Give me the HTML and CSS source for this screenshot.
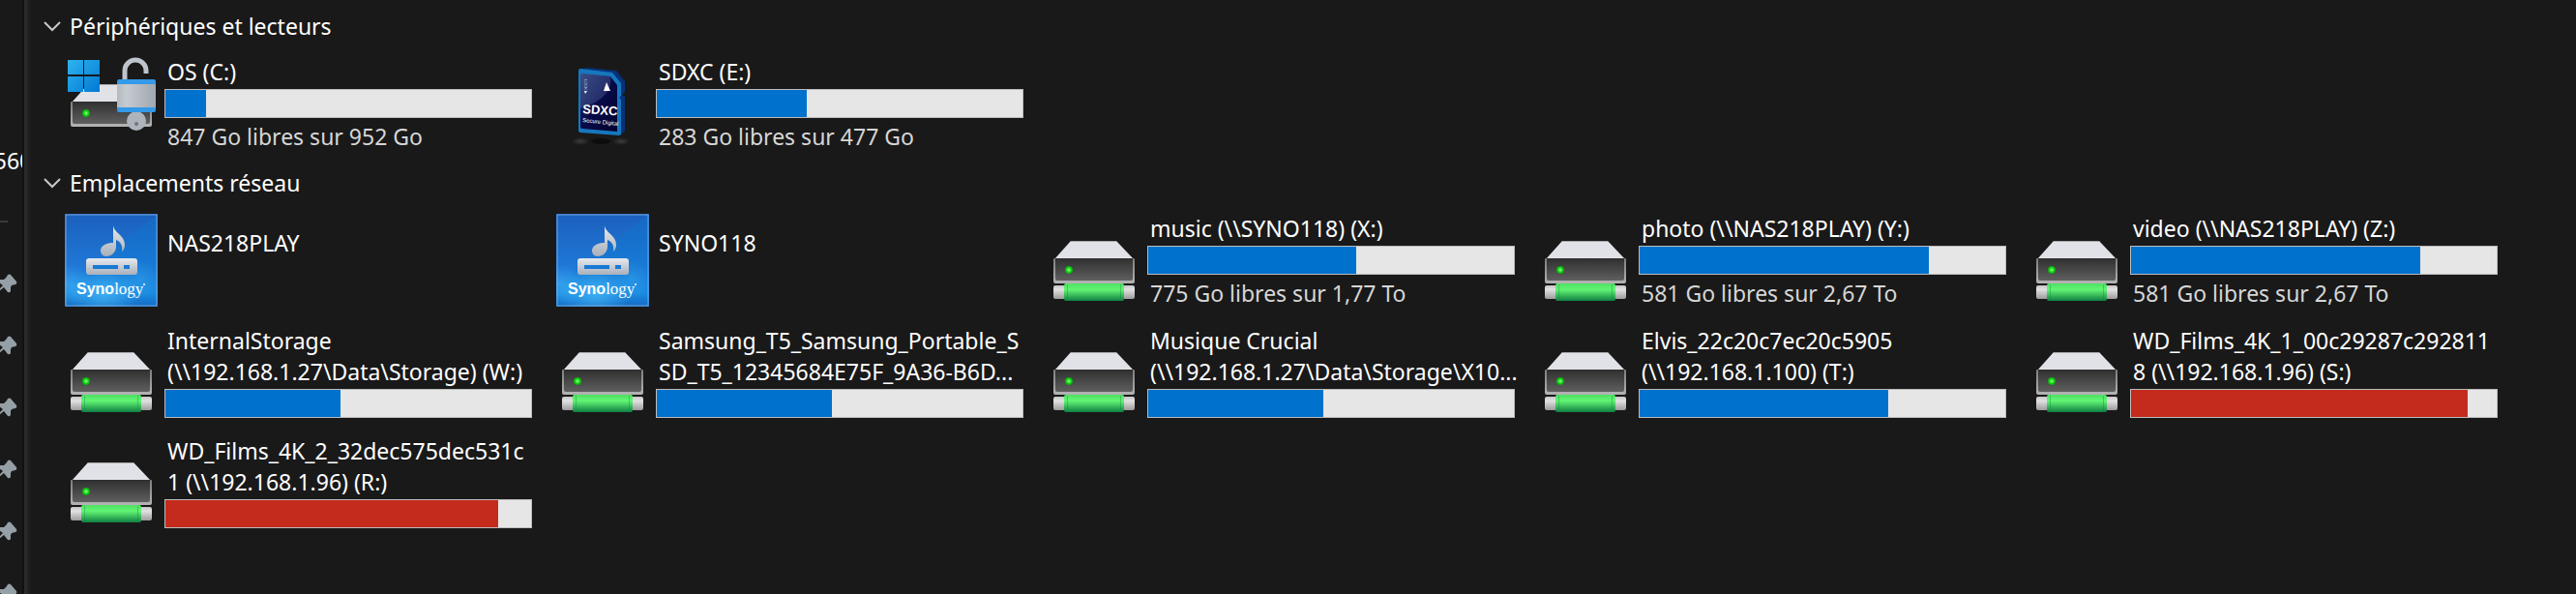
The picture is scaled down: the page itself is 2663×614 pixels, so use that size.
FILE: index.html
```
<!DOCTYPE html>
<html lang="fr">
<head>
	<meta charset="UTF-8">
	<title>Ce PC</title>
	<link rel="stylesheet" href="styles.css">
</head>
<body>
	<!-- shared icons -->
	<svg class="defs" width="0" height="0" aria-hidden="true">
		<defs>
			<linearGradient id="front" x1="0" y1="0" x2="0" y2="1">
				<stop offset="0" stop-color="#2f2f2f"/>
				<stop offset="1" stop-color="#5f5f5f"/>
			</linearGradient>
			<linearGradient id="edge" x1="0" y1="0" x2="0" y2="1">
				<stop offset="0" stop-color="#7c7c7c"/>
				<stop offset="1" stop-color="#b4b4b4"/>
			</linearGradient>
			<linearGradient id="pipe" x1="0" y1="0" x2="0" y2="1">
				<stop offset="0" stop-color="#c4c4c4"/>
				<stop offset=".3" stop-color="#e2e2e2"/>
				<stop offset="1" stop-color="#9c9c9c"/>
			</linearGradient>
			<linearGradient id="green" x1="0" y1="0" x2="0" y2="1">
				<stop offset="0" stop-color="#4fe063"/>
				<stop offset=".35" stop-color="#62f574"/>
				<stop offset="1" stop-color="#108043"/>
			</linearGradient>
			<radialGradient id="led">
				<stop offset="0" stop-color="#a8ffa0"/>
				<stop offset=".5" stop-color="#1fe01f"/>
				<stop offset="1" stop-color="#07a007"/>
			</radialGradient>
			<linearGradient id="win" x1="0" y1="0" x2="1" y2="1">
				<stop offset="0" stop-color="#2fb4ee"/>
				<stop offset="1" stop-color="#0078d4"/>
			</linearGradient>
			<linearGradient id="steel" x1="0" y1="0" x2="1" y2="0">
				<stop offset="0" stop-color="#b4bac2"/>
				<stop offset=".25" stop-color="#c6cad1"/>
				<stop offset="1" stop-color="#9fa7b0"/>
			</linearGradient>
			<linearGradient id="sky" x1="0" y1="0" x2="0" y2="1">
				<stop offset="0" stop-color="#1c60bd"/>
				<stop offset=".6" stop-color="#2079d8"/>
				<stop offset=".85" stop-color="#2592ea"/>
				<stop offset="1" stop-color="#1a62bd"/>
			</linearGradient>
			<radialGradient id="glow">
				<stop offset="0" stop-color="#45b8f8" stop-opacity=".8"/>
				<stop offset="1" stop-color="#45b8f8" stop-opacity="0"/>
			</radialGradient>
			<linearGradient id="silver" x1="0" y1="0" x2="0" y2="1">
				<stop offset="0" stop-color="#e6e9ee"/>
				<stop offset="1" stop-color="#a9b0ba"/>
			</linearGradient>
			<linearGradient id="card" x1="0" y1="0" x2="1" y2="1">
				<stop offset="0" stop-color="#24386f"/>
				<stop offset=".5" stop-color="#080a48"/>
				<stop offset="1" stop-color="#02022e"/>
			</linearGradient>
			<radialGradient id="shade">
				<stop offset="0" stop-color="#3c3c3c"/>
				<stop offset="1" stop-color="#3c3c3c" stop-opacity="0"/>
			</radialGradient>
		</defs>

		<symbol id="box" viewBox="0 0 96 96">
			<path d="M24 28h47l18 19H7z" fill="#e1e2e7"/>
			<path d="M24 28.500h47" stroke="#a9a9ad"/>
			<path d="M6 47q0-1 1-1h82q1 0 1 1v23q0 2-2 2H8q-2 0-2-2z" fill="url(#edge)"/>
			<path d="M8 46h80v21q0 2-2 2H10q-2 0-2-2z" fill="url(#front)"/>
			<circle cx="22" cy="58" r="4" fill="url(#led)"/>
		</symbol>

		<symbol id="netdrive" viewBox="0 0 96 96">
			<use href="#box" width="96" height="96"/>
			<rect x="6" y="74" width="84" height="14" rx="2" fill="url(#pipe)"/>
			<rect x="17" y="72" width="62" height="18" rx="2" fill="url(#green)"/>
			<path d="M20.500 73v16M75.500 73v16" stroke="#0e7a3c" stroke-opacity=".35"/>
		</symbol>

		<symbol id="osdrive" viewBox="0 0 96 96">
			<use href="#box" width="96" height="96"/>
			<path d="M3 3h16v15H3zM20 3h16v15H20zM3 20h16v16H3zM20 20h16v16H20z" fill="url(#win)"/>
			<path d="M62 24V14a11 11 0 0 1 22 0v3" fill="none" stroke="#bfc4cc" stroke-width="5"/>
			<circle cx="74" cy="66" r="10" fill="#adb4bc"/>
			<circle cx="74" cy="69" r="2" fill="#6f757c"/>
			<rect x="54" y="23" width="40" height="34" rx="2" fill="#3399e8"/>
			<rect x="54" y="28" width="40" height="24" fill="url(#steel)"/>
		</symbol>

		<symbol id="sdcard" viewBox="0 0 96 96">
			<ellipse cx="25" cy="87" rx="9" ry="4" fill="url(#shade)"/>
			<ellipse cx="67" cy="87" rx="9" ry="4" fill="url(#shade)"/>
			<ellipse cx="46" cy="87" rx="10" ry="3" fill="#0d0d0d"/>
			<path d="M24 13l8-2 30 3 9 11v11l-3 3 3 2v35l-5 5z" fill="#06327c"/>
			<path d="M23 14q0-2 2-2l33 4 9 11v13l-2 2 2 2v35q0 2-2 2l-40-3q-2 0-2-2z" fill="#1677bd"/>
			<path d="M25 19q0-2 2-2l29 3 7 9v48l-36-3q-2 0-2-2z" fill="url(#card)"/>
			<path d="M25 19q0-2 2-2l29 3q4 22-31 33z" fill="#7d93cf" opacity=".25"/>
			<path d="M52 26l4 9h-7z" fill="#fff"/>
			<path d="M29 35h3l-2 3z" fill="#fff"/>
			<text class="sd-lock" x="29" y="23" transform="rotate(90 29 23)">LOCK</text>
			<text class="sd-name" x="27" y="58" transform="rotate(4 27 58)">SDXC</text>
			<text class="sd-sub" x="27" y="67" transform="rotate(6 27 67)">Secure Digital</text>
		</symbol>

		<symbol id="synology" viewBox="0 0 96 96">
			<rect width="96" height="96" fill="url(#sky)"/>
			<path d="M96 0v96H0V76z" fill="#067fd0" opacity=".3"/>
			<ellipse cx="40" cy="82" rx="38" ry="26" fill="url(#glow)"/>
			<circle cx="6" cy="74" r="22" fill="url(#glow)" opacity=".6"/>
			<circle cx="78" cy="68" r="20" fill="url(#glow)" opacity=".4"/>
			<rect x="1" y="1" width="94" height="94" fill="none" stroke="#86b3e4" stroke-opacity=".8"/>
			<path d="M50 12c1 8 12 10 12 20 0 3-1 5-3 7 1-6-1-10-6-12v7c0 6-5 10-10 10-4 0-6-3-6-6 0-5 6-8 13-8z" fill="url(#silver)"/>
			<path d="M25 46h47q3 0 3 3v11q0 3-3 3H25q-3 0-3-3V49q0-3 3-3zm4 7v4h26v-4zm32 0v4h6v-4z" fill="url(#silver)" fill-rule="evenodd"/>
			<text class="syno-bold" x="12" y="83">Syno<tspan class="syno-thin">logy</tspan></text>
			<circle cx="82" cy="73" r="1" fill="#fff"/>
		</symbol>

		<symbol id="pin" viewBox="0 0 20 20">
			<path d="M10 1q2-1 3 0l6 7q1 2-1 3l-4 1-1 2v4q-1 2-3 1l-4-5-5 4-1-1 5-5-4-3q-1-2 1-3h4l3-3z" fill="#959fa6"/>
		</symbol>
	</svg>

	<div class="explorer">
		<aside class="sidebar">
			<span class="folder">560</span>
			<hr class="divider">
			<ul class="pins">
				<li><svg><use href="#pin"/></svg></li>
				<li><svg><use href="#pin"/></svg></li>
				<li><svg><use href="#pin"/></svg></li>
				<li><svg><use href="#pin"/></svg></li>
				<li><svg><use href="#pin"/></svg></li>
				<li><svg><use href="#pin"/></svg></li>
			</ul>
		</aside>
		<div class="splitter"></div>

		<main class="content">
			<section class="group">
				<h2>
					<button class="group-title" type="button">
						<svg class="chevron" viewBox="0 0 16 9"><path d="M0 0l8 8 8-8"/></svg>
						Périphériques et lecteurs
					</button>
				</h2>
				<div class="items">
					<div class="item">
						<svg class="icon"><use href="#osdrive"/></svg>
						<div class="info">
							<p class="name">OS (C:)</p>
							<div class="bar"><div class="used" style="width:11%"></div></div>
							<p class="free">847 Go libres sur 952 Go</p>
						</div>
					</div>
					<div class="item">
						<svg class="icon"><use href="#sdcard"/></svg>
						<div class="info">
							<p class="name">SDXC (E:)</p>
							<div class="bar"><div class="used" style="width:41%"></div></div>
							<p class="free">283 Go libres sur 477 Go</p>
						</div>
					</div>
				</div>
			</section>

			<section class="group">
				<h2>
					<button class="group-title" type="button">
						<svg class="chevron" viewBox="0 0 16 9"><path d="M0 0l8 8 8-8"/></svg>
						Emplacements réseau
					</button>
				</h2>
				<div class="items">
					<div class="item">
						<svg class="icon"><use href="#synology"/></svg>
						<div class="info device">
							<p class="name">NAS218PLAY</p>
						</div>
					</div>
					<div class="item">
						<svg class="icon"><use href="#synology"/></svg>
						<div class="info device">
							<p class="name">SYNO118</p>
						</div>
					</div>
					<div class="item">
						<svg class="icon"><use href="#netdrive"/></svg>
						<div class="info">
							<p class="name">music (\\SYNO118) (X:)</p>
							<div class="bar"><div class="used" style="width:57%"></div></div>
							<p class="free">775 Go libres sur 1,77 To</p>
						</div>
					</div>
					<div class="item">
						<svg class="icon"><use href="#netdrive"/></svg>
						<div class="info">
							<p class="name">photo (\\NAS218PLAY) (Y:)</p>
							<div class="bar"><div class="used" style="width:79%"></div></div>
							<p class="free">581 Go libres sur 2,67 To</p>
						</div>
					</div>
					<div class="item">
						<svg class="icon"><use href="#netdrive"/></svg>
						<div class="info">
							<p class="name">video (\\NAS218PLAY) (Z:)</p>
							<div class="bar"><div class="used" style="width:79%"></div></div>
							<p class="free">581 Go libres sur 2,67 To</p>
						</div>
					</div>
					<div class="item">
						<svg class="icon"><use href="#netdrive"/></svg>
						<div class="info">
							<p class="name">InternalStorage<br>(\\192.168.1.27\Data\Storage) (W:)</p>
							<div class="bar"><div class="used" style="width:48%"></div></div>
						</div>
					</div>
					<div class="item">
						<svg class="icon"><use href="#netdrive"/></svg>
						<div class="info">
							<p class="name">Samsung_T5_Samsung_Portable_S<br>SD_T5_12345684E75F_9A36-B6D...</p>
							<div class="bar"><div class="used" style="width:48%"></div></div>
						</div>
					</div>
					<div class="item">
						<svg class="icon"><use href="#netdrive"/></svg>
						<div class="info">
							<p class="name">Musique Crucial<br>(\\192.168.1.27\Data\Storage\X10...</p>
							<div class="bar"><div class="used" style="width:48%"></div></div>
						</div>
					</div>
					<div class="item">
						<svg class="icon"><use href="#netdrive"/></svg>
						<div class="info">
							<p class="name">Elvis_22c20c7ec20c5905<br>(\\192.168.1.100) (T:)</p>
							<div class="bar"><div class="used" style="width:68%"></div></div>
						</div>
					</div>
					<div class="item">
						<svg class="icon"><use href="#netdrive"/></svg>
						<div class="info">
							<p class="name">WD_Films_4K_1_00c29287c292811<br>8 (\\192.168.1.96) (S:)</p>
							<div class="bar"><div class="used full" style="width:92%"></div></div>
						</div>
					</div>
					<div class="item">
						<svg class="icon"><use href="#netdrive"/></svg>
						<div class="info">
							<p class="name">WD_Films_4K_2_32dec575dec531c<br>1 (\\192.168.1.96) (R:)</p>
							<div class="bar"><div class="used full" style="width:91%"></div></div>
						</div>
					</div>
				</div>
			</section>
		</main>
	</div>
</body>
</html>
```
FILE: styles.css
```
*{
	margin:0;
	padding:0;
	box-sizing: border-box;
}
body{
	background: #191919;
	color: #fff;
	font: 23px/32px "Segoe UI", "Noto Sans", sans-serif;
	overflow: hidden;
}
.defs{
	position: absolute;
}
.explorer{
	display: flex;
	height: 100vh;
}
/* navigation pane, only its right edge is visible */
.sidebar{
	width: 23px;
	padding-top: 150px;
	overflow: hidden;
}
.folder{
	display: flex;
	justify-content: center;
	margin-left: 4px;
}
.divider{
	width: 8px;
	height: 2px;
	margin-top: 46px;
	border: 0;
	background: #3a3a3a;
}
.pins{
	margin-top: 53px;
	list-style: none;
}
.pins li{
	height: 64px;
}
.pins svg{
	display: block;
	width: 20px;
	height: 20px;
	margin-left: -2px;
}
.splitter{
	width: 8px;
	border-left: 2px solid #121212;
	border-right: 3px solid #202020;
	background: #2b2b2b;
}
.content{
	flex: 1;
	padding: 11px 15px;
}
.group{
	margin-bottom: 17px;
}
.group-title{
	display: flex;
	align-items: center;
	gap: 10px;
	border: 0;
	background: none;
	color: #fff;
	font: inherit;
}
h2{
	margin-bottom: 15px;
	font: inherit;
}
.chevron{
	width: 16px;
	height: 9px;
	overflow: visible;
	fill: none;
	stroke: #c8c8c8;
	stroke-width: 2;
}
.items{
	display: grid;
	grid-template-columns: repeat(auto-fill, 483px);
	gap: 18px 25px;
	padding-left: 21px;
}
.item{
	display: flex;
	align-items: center;
	gap: 7px;
}
.icon{
	flex: none;
	width: 96px;
	height: 96px;
}
.info{
	flex: 1;
	min-width: 0;
}
.device{
	padding-bottom: 36px;
}
.name, .free{
	padding-left: 3px;
	white-space: nowrap;
}
.free{
	margin: 3px 0 -1px;
	color: #d6d6d6;
}
.bar{
	height: 30px;
	margin-top: 2px;
	border: 1px solid #bcbcbc;
	background: #e6e6e6;
}
.used{
	height: 100%;
	background: #0071cd;
}
.full{
	background: #c42b1c;
}
/* lettering inside the icons */
.sd-name{
	fill: #fff;
	font: bold 13px "Liberation Sans", sans-serif;
}
.sd-sub{
	fill: #fff;
	font: 6px "Liberation Sans Narrow", "Liberation Sans", sans-serif;
}
.sd-lock{
	fill: #c3cbe6;
	font: 4px "Liberation Sans", sans-serif;
}
.syno-bold{
	fill: #fff;
	font: bold 16px "Liberation Sans", sans-serif;
}
.syno-thin{
	font: 17px "Liberation Serif", serif;
}
```
